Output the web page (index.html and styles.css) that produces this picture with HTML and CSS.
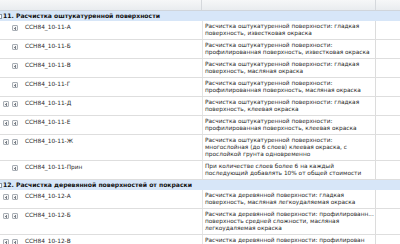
FILE: index.html
```html
<!DOCTYPE html>
<html>
<head>
<meta charset="utf-8">
<link rel="stylesheet" href="styles.css">
</head>
<body>
<div class="grid">
  <div class="head">
    <div class="c1"></div><div class="c2"></div><div class="c3"></div>
  </div>

  <div class="group"><span class="gbox"></span>11. Расчистка оштукатуренной поверхности</div>

  <div class="row">
    <div class="c1"><span class="ic none"></span><span class="ic plus"></span><span class="code">СCH84_10-11-А</span></div>
    <div class="c2">Расчистка оштукатуренной поверхности: гладкая<br>поверхность, известковая окраска</div>
    <div class="c3"></div>
  </div>
  <div class="row">
    <div class="c1"><span class="ic none"></span><span class="ic plus"></span><span class="code">СCH84_10-11-Б</span></div>
    <div class="c2">Расчистка оштукатуренной поверхности:<br>профилированная поверхность, известковая окраска</div>
    <div class="c3"></div>
  </div>
  <div class="row">
    <div class="c1"><span class="ic none"></span><span class="ic plus"></span><span class="code">СCH84_10-11-В</span></div>
    <div class="c2">Расчистка оштукатуренной поверхности: гладкая<br>поверхность, масляная окраска</div>
    <div class="c3"></div>
  </div>
  <div class="row">
    <div class="c1"><span class="ic none"></span><span class="ic plus"></span><span class="code">СCH84_10-11-Г</span></div>
    <div class="c2">Расчистка оштукатуренной поверхности:<br>профилированная поверхность, масляная окраска</div>
    <div class="c3"></div>
  </div>
  <div class="row">
    <div class="c1"><span class="ic plus"></span><span class="ic plus"></span><span class="code">СCH84_10-11-Д</span></div>
    <div class="c2">Расчистка оштукатуренной поверхности: гладкая<br>поверхность, клеевая окраска</div>
    <div class="c3"></div>
  </div>
  <div class="row">
    <div class="c1"><span class="ic plus"></span><span class="ic plus"></span><span class="code">СCH84_10-11-Е</span></div>
    <div class="c2">Расчистка оштукатуренной поверхности:<br>профилированная поверхность, клеевая окраска</div>
    <div class="c3"></div>
  </div>
  <div class="row">
    <div class="c1"><span class="ic plus"></span><span class="ic plus"></span><span class="code">СCH84_10-11-Ж</span></div>
    <div class="c2">Расчистка оштукатуренной поверхности:<br>многослойная (до 6 слоев) клеевая окраска, с<br>прослойкой грунта одновременно</div>
    <div class="c3"></div>
  </div>
  <div class="row">
    <div class="c1"><span class="ic none"></span><span class="ic plus"></span><span class="code">СCH84_10-11-Прин</span></div>
    <div class="c2">При количестве слоев более 6 на каждый<br>последующий добавлять 10% от общей стоимости</div>
    <div class="c3"></div>
  </div>

  <div class="group"><span class="gbox"></span>12. Расчистка деревянной поверхностей от покраски</div>

  <div class="row">
    <div class="c1"><span class="ic plus"></span><span class="ic plus"></span><span class="code">СCH84_10-12-А</span></div>
    <div class="c2">Расчистка деревянной поверхности: гладкая<br>поверхность, масляная легкоудаляемая окраска</div>
    <div class="c3"></div>
  </div>
  <div class="row">
    <div class="c1"><span class="ic plus"></span><span class="ic plus"></span><span class="code">СCH84_10-12-Б</span></div>
    <div class="c2">Расчистка деревянной поверхности: профилированн...<br>поверхность средней сложности, масляная<br>легкоудаляемая окраска</div>
    <div class="c3"></div>
  </div>
  <div class="row">
    <div class="c1"><span class="ic plus"></span><span class="ic plus"></span><span class="code">СCH84_10-12-В</span></div>
    <div class="c2">Расчистка деревянной поверхности: профилирован</div>
    <div class="c3"></div>
  </div>
</div>
</body>
</html>
```

FILE: styles.css
```css
* { box-sizing: border-box; }
html, body { margin: 0; padding: 0; background: #fff; }
body {
  font-family: "DejaVu Sans", "Liberation Sans", sans-serif;
  font-size: 5.8px;
  color: #2a2a2a;
  width: 400px;
  height: 244px;
  overflow: hidden;
}
.grid { width: 400px; }
.head {
  display: flex;
  height: 11px;
  background: linear-gradient(#f6f7f8, #e9ecef);
  border-bottom: 1px solid #d0d5db;
}
.head .c1 { width: 202px; border-right: 1px solid #d5d8dc; }
.head .c2 { width: 174px; border-right: 1px solid #d5d8dc; }
.head .c3 { flex: 1; }
.group {
  height: 10px;
  line-height: 10px;
  background: #d7e6f8;
  font-weight: bold;
  font-size: 6.1px;
  color: #111;
  white-space: nowrap;
  overflow: hidden;
  display: flex;
  align-items: center;
}
.gbox {
  width: 5px;
  height: 5px;
  border: 1px solid #8a96a6;
  background: #fff;
  margin-left: -3px;
  margin-right: 1px;
  flex: none;
}
.row {
  display: flex;
  border-bottom: 1px solid #dedede;
}
.row .c1 {
  width: 202px;
  display: flex;
  align-items: flex-start;
  padding-top: 4px;
  padding-left: 3px;
  white-space: nowrap;
}
.row .c2 {
  width: 174px;
  padding: 2px 0 2px 2px;
  line-height: 7px;
  border-left: 1px solid #e4e4e4;
  border-right: 1px solid #dcdcdc;
  white-space: nowrap;
  overflow: hidden;
}
.row .c3 { flex: 1; }
.ic {
  width: 6px;
  height: 6px;
  margin-right: 3px;
  flex: none;
  position: relative;
}
.ic.plus {
  border: 1px solid #a8aeb5;
  border-radius: 1px;
  background: #f6f6f6;
}
.ic.plus::before, .ic.plus::after {
  content: "";
  position: absolute;
  background: #7a8088;
}
.ic.plus::before { left: 1px; right: 1px; top: 1.5px; height: 1px; }
.ic.plus::after { top: 0.5px; bottom: 0.5px; left: 1.5px; width: 1px; }
.code { margin-left: 4px; line-height: 7px; margin-top: -1px; }
```
